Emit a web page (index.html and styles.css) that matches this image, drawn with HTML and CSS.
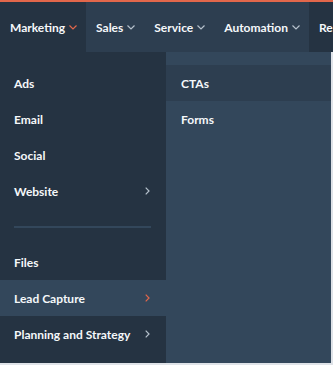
FILE: index.html
```html
<!DOCTYPE html>
<html>
<head>
<meta charset="utf-8">
<link rel="stylesheet" href="styles.css">
</head>
<body>
<div class="page">
  <nav class="nav">
    <div class="tab tab-active">Marketing<svg class="down down-active" width="8" height="5" viewBox="0 0 8 5"><polyline points="0.5,0.5 4,4 7.5,0.5" fill="none" stroke="currentColor" stroke-width="1.2"/></svg></div>
    <div class="tab">Sales<svg class="down" width="8" height="5" viewBox="0 0 8 5"><polyline points="0.5,0.5 4,4 7.5,0.5" fill="none" stroke="currentColor" stroke-width="1.2"/></svg></div>
    <div class="tab">Service<svg class="down" width="8" height="5" viewBox="0 0 8 5"><polyline points="0.5,0.5 4,4 7.5,0.5" fill="none" stroke="currentColor" stroke-width="1.2"/></svg></div>
    <div class="tab">Automation<svg class="down" width="8" height="5" viewBox="0 0 8 5"><polyline points="0.5,0.5 4,4 7.5,0.5" fill="none" stroke="currentColor" stroke-width="1.2"/></svg></div>
    <div class="tab tab-dark">Re</div>
  </nav>
  <div class="menu">
    <ul class="col col-left">
      <li class="item">Ads</li>
      <li class="item">Email</li>
      <li class="item">Social</li>
      <li class="item">Website<svg class="right" width="5" height="8" viewBox="0 0 5 8"><polyline points="0.7,0.7 4,4 0.7,7.3" fill="none" stroke="currentColor" stroke-width="1.2"/></svg></li>
      <li class="divider"></li>
      <li class="item">Files</li>
      <li class="item item-hl">Lead Capture<svg class="right right-active" width="5" height="8" viewBox="0 0 5 8"><polyline points="0.7,0.7 4,4 0.7,7.3" fill="none" stroke="currentColor" stroke-width="1.2"/></svg></li>
      <li class="item">Planning and Strategy<svg class="right" width="5" height="8" viewBox="0 0 5 8"><polyline points="0.7,0.7 4,4 0.7,7.3" fill="none" stroke="currentColor" stroke-width="1.2"/></svg></li>
    </ul>
    <ul class="col col-right">
      <li class="item item-hover">CTAs</li>
      <li class="item">Forms</li>
    </ul>
  </div>
</div>
</body>
</html>
```

FILE: styles.css
```css
html, body {
  margin: 0;
  padding: 0;
}
body {
  background: #dfe3e8;
  font-family: Lato, "Noto Sans", sans-serif;
  font-weight: 700;
  font-size: 12px;
  color: #f5f8fa;
  width: 333px;
  height: 365px;
  overflow: hidden;
}
.page {
  width: 333px;
}
.nav {
  display: flex;
  height: 50px;
  background: #2d3e50;
  border-top: 2px solid #e2674b;
  overflow: hidden;
}
.tab {
  display: flex;
  align-items: center;
  gap: 4px;
  padding: 0 9px 0 10px;
  white-space: nowrap;
}
.tab-active {
  background: #253342;
}
.tab-dark {
  background: #253342;
  flex: 1;
}
.down {
  color: #b5c1cc;
  margin-top: 1px;
}
.down-active {
  color: #e2674b;
}
.menu {
  display: flex;
  height: 311px;
}
.col {
  list-style: none;
  margin: 0;
  padding: 13px 0 0;
}
.col-left {
  width: 166px;
  background: #253342;
}
.col-right {
  width: 165px;
  background: #33475b;
}
.item {
  height: 36px;
  display: flex;
  align-items: center;
  justify-content: space-between;
  padding: 0 16px 0 14px;
}
.item-hl {
  background: #33475b;
}
.item-hover {
  background: #2d3e50;
}
.col-right .item {
  padding-left: 15px;
}
.divider {
  height: 35px;
  margin: 0 15px 0 14px;
  background: linear-gradient(#33475b, #33475b) no-repeat 0 17px / 100% 2px;
}
.right {
  color: #b5c1cc;
}
.right-active {
  color: #e2674b;
}
```
